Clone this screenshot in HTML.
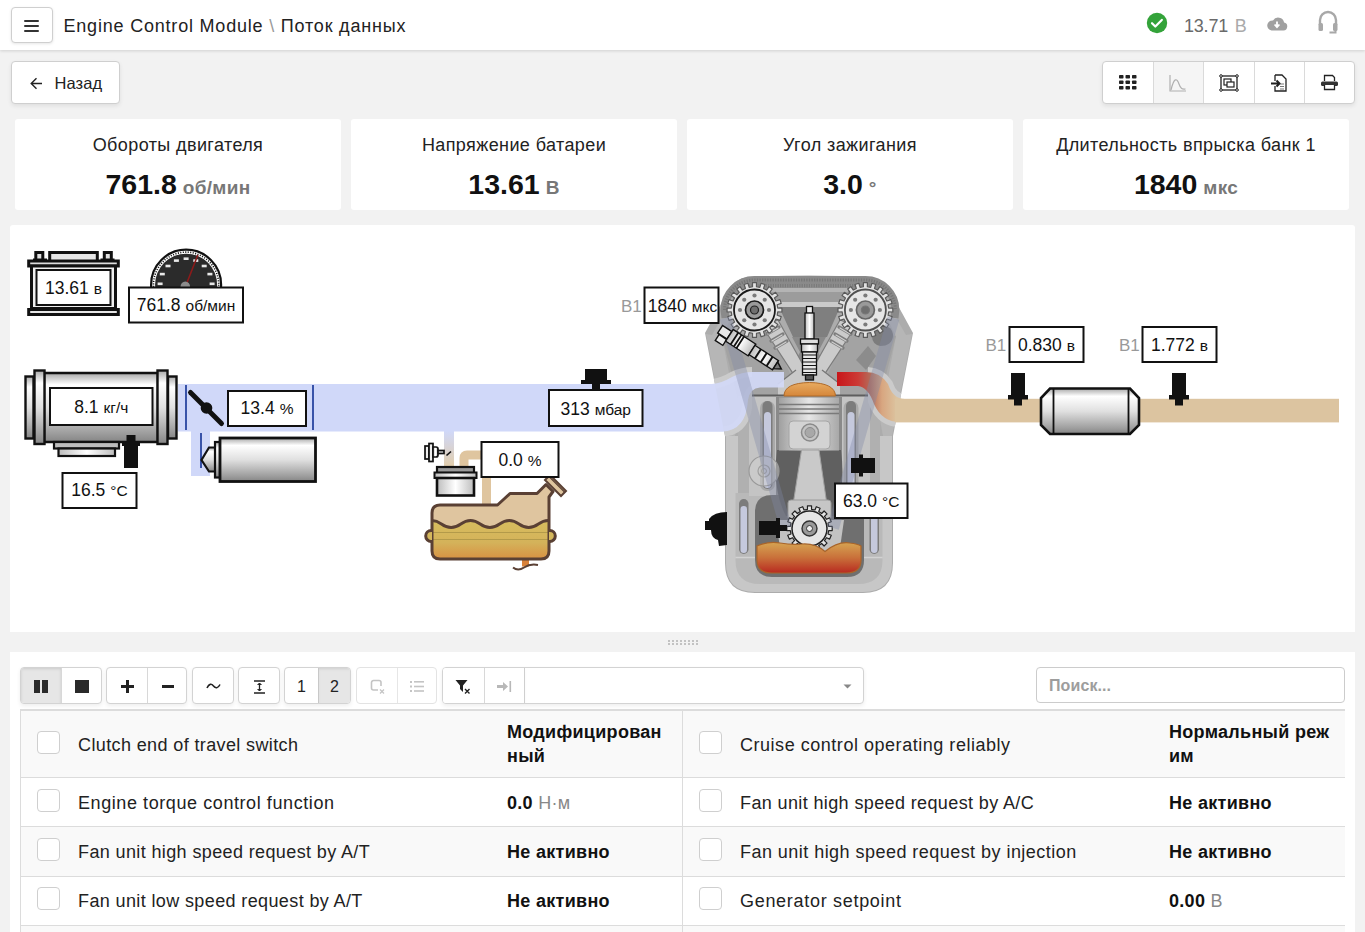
<!DOCTYPE html>
<html><head><meta charset="utf-8">
<style>
*{box-sizing:border-box}
html,body{margin:0;padding:0}
body{width:1365px;height:932px;overflow:hidden;background:#f2f2f2;font-family:"Liberation Sans",sans-serif;color:#222;position:relative}
.a{position:absolute}
.t{position:absolute;white-space:nowrap;line-height:1}
#hdr{left:0;top:0;width:1365px;height:50px;background:#fff;box-shadow:0 1px 3px rgba(0,0,0,.14)}
.btn{position:absolute;background:#fff;border:1px solid #cfcfcf;border-radius:4px;box-shadow:0 2px 4px rgba(0,0,0,.08)}
.card{position:absolute;top:119px;width:326px;height:91px;background:#fff;border-radius:3px}
.card .ttl{position:absolute;left:0;right:0;top:134px;text-align:center;font-size:18px;letter-spacing:.4px;color:#222;line-height:18px}
.card .val{position:absolute;left:0;right:0;text-align:center;line-height:28px;top:50.5px;white-space:nowrap}
.card .val b{font-size:28.5px;color:#111}
.card .val span{font-size:19px;font-weight:bold;color:#777;margin-left:6px;letter-spacing:.3px}
.panel{position:absolute;background:#fff}
.tb{position:absolute;top:667px;height:37px;border:1px solid #d3d3d3;border-radius:4px;background:#fff;box-shadow:0 2px 4px rgba(0,0,0,.07);overflow:hidden}
.tb i{position:absolute;top:0;bottom:0;border-left:1px solid #d8d8d8}
.row{position:absolute;left:21px;width:1324px;border-bottom:1px solid #dcdcdc}
.cb{position:absolute;width:23px;height:23px;border:1px solid #cfcfcf;border-radius:4px;background:#fff}
.rt{position:absolute;font-size:18px;letter-spacing:.38px;line-height:18px;white-space:nowrap;color:#222}
.rv{position:absolute;font-size:18px;font-weight:bold;letter-spacing:.3px;line-height:18px;white-space:nowrap;color:#111}
.rv span{font-weight:normal;color:#888}
</style></head><body>

<!-- header -->
<div id="hdr" class="a"></div>
<div class="btn" style="left:10.5px;top:7px;width:42px;height:35.5px;box-shadow:0 1px 3px rgba(0,0,0,.1)">
  <div class="a" style="left:12.5px;top:11.5px;width:15px;height:2.6px;background:#333;border-radius:1.3px"></div>
  <div class="a" style="left:12.5px;top:16.5px;width:15px;height:2.6px;background:#333;border-radius:1.3px"></div>
  <div class="a" style="left:12.5px;top:21.5px;width:15px;height:2.6px;background:#333;border-radius:1.3px"></div>
</div>
<div class="t" style="left:63.5px;top:17px;font-size:18px;letter-spacing:.8px;color:#222">Engine Control Module <span style="color:#999">\</span> Поток данных</div>

<svg class="a" style="left:1146px;top:12px" width="22" height="22" viewBox="0 0 22 22"><circle cx="11" cy="11" r="10.2" fill="#34a33a"/><path d="M6 11.2l3.3 3.3 6.5-6.6" fill="none" stroke="#fff" stroke-width="2.2" stroke-linecap="round" stroke-linejoin="round"/></svg>
<div class="t" style="left:1184px;top:17px;font-size:18px;color:#6a6a6a;letter-spacing:-.2px">13.71 <span style="color:#aaa;margin-left:2px">В</span></div>
<svg class="a" style="left:1266px;top:15px" width="22" height="17" viewBox="0 0 22 17"><path d="M5.5 15.5h12a4 4 0 0 0 .6-7.9A6 6 0 0 0 7 5.6a5 5 0 0 0-1.5 9.9z" fill="#a0a0a0"/><path d="M11 6.5v5M8.6 9.5l2.4 2.6 2.4-2.6" fill="none" stroke="#fff" stroke-width="1.8"/></svg>
<svg class="a" style="left:1317px;top:10px" width="22" height="25" viewBox="0 0 22 25"><path d="M3 15V10a8 8 0 0 1 16 0v5" fill="none" stroke="#a8a8a8" stroke-width="2.4"/><rect x="1.5" y="13" width="4.5" height="8" rx="1.5" fill="#a8a8a8"/><rect x="16" y="13" width="4.5" height="8" rx="1.5" fill="#a8a8a8"/><path d="M18.5 20v2.5h-6" fill="none" stroke="#a8a8a8" stroke-width="2"/></svg>

<!-- back button -->
<div class="btn" style="left:10.5px;top:61px;width:109px;height:42.5px">
  <svg class="a" style="left:18px;top:15px" width="13" height="13" viewBox="0 0 13 13"><path d="M12 6.5H1.5M6.5 1.2L1.2 6.5l5.3 5.3" fill="none" stroke="#222" stroke-width="1.4"/></svg>
  <div class="t" style="left:43px;top:12.5px;font-size:16.5px;letter-spacing:.1px;color:#222">Назад</div>
</div>

<!-- top right toolbar -->
<div class="btn" style="left:1102px;top:61px;width:253px;height:43px;overflow:hidden">
  <div class="a" style="left:49.5px;top:0;width:51px;height:43px;background:#f5f5f5"></div>
  <div class="a" style="left:49.5px;top:0;height:43px;border-left:1px solid #dadada"></div>
  <div class="a" style="left:100px;top:0;height:43px;border-left:1px solid #dadada"></div>
  <div class="a" style="left:150.5px;top:0;height:43px;border-left:1px solid #dadada"></div>
  <div class="a" style="left:201px;top:0;height:43px;border-left:1px solid #dadada"></div>
  <svg class="a" style="left:16px;top:13px" width="18" height="15" viewBox="0 0 18 15"><g fill="#222"><rect x="0" y="0" width="4.5" height="3.5" rx=".8"/><rect x="6.5" y="0" width="4.5" height="3.5" rx=".8"/><rect x="13" y="0" width="4.5" height="3.5" rx=".8"/><rect x="0" y="5.5" width="4.5" height="3.5" rx=".8"/><rect x="6.5" y="5.5" width="4.5" height="3.5" rx=".8"/><rect x="13" y="5.5" width="4.5" height="3.5" rx=".8"/><rect x="0" y="11" width="4.5" height="3.5" rx=".8"/><rect x="6.5" y="11" width="4.5" height="3.5" rx=".8"/><rect x="13" y="11" width="4.5" height="3.5" rx=".8"/></g></svg>
  <svg class="a" style="left:66px;top:13px" width="18" height="17" viewBox="0 0 18 17"><path d="M1 0v16h16" fill="none" stroke="#b0b0b0" stroke-width="1.2"/><path d="M2 15C5 2 8 3 10 9s4 5 6.5 5" fill="none" stroke="#b0b0b0" stroke-width="1.2"/></svg>
  <svg class="a" style="left:116px;top:12px" width="20" height="18" viewBox="0 0 20 18"><rect x="2" y="2" width="16" height="14" fill="none" stroke="#222" stroke-width="1.3"/><rect x="5" y="5" width="7" height="6" fill="#fff" stroke="#222" stroke-width="1.2"/><rect x="8" y="8" width="7" height="5" fill="#fff" stroke="#222" stroke-width="1.2"/><g fill="#fff" stroke="#222" stroke-width="1"><circle cx="2" cy="2" r="1.3"/><circle cx="18" cy="2" r="1.3"/><circle cx="2" cy="16" r="1.3"/><circle cx="18" cy="16" r="1.3"/></g></svg>
  <svg class="a" style="left:167px;top:12px" width="18" height="18" viewBox="0 0 18 18"><path d="M5 1h7l4 4v12H5v-5M5 7V1" fill="none" stroke="#222" stroke-width="1.3"/><path d="M1 9.5h8M6.5 6.5l3 3-3 3" fill="none" stroke="#222" stroke-width="2"/><path d="M10 10h4M10 12.5h4M10 15h4" stroke="#555" stroke-width=".8"/></svg>
  <svg class="a" style="left:217px;top:12px" width="19" height="17" viewBox="0 0 19 17"><path d="M4.5 7V1.5h8l2 2V7" fill="#fff" stroke="#222" stroke-width="1.3"/><rect x="1" y="7.5" width="17" height="4.5" rx="1.5" fill="#333"/><path d="M4.5 11v4.5h10V11" fill="#fff" stroke="#222" stroke-width="1.3"/></svg>
</div>

<!-- stat cards -->
<div class="card" style="left:15px"><div class="t ttl" style="top:17px">Обороты двигателя</div><div class="val"><b>761.8</b><span>об/мин</span></div></div>
<div class="card" style="left:351px"><div class="t ttl" style="top:17px">Напряжение батареи</div><div class="val"><b>13.61</b><span>В</span></div></div>
<div class="card" style="left:687px"><div class="t ttl" style="top:17px">Угол зажигания</div><div class="val"><b>3.0</b><span>°</span></div></div>
<div class="card" style="left:1023px"><div class="t ttl" style="top:17px">Длительность впрыска банк 1</div><div class="val"><b>1840</b><span>мкс</span></div></div>

<!-- panels -->
<div class="panel" style="left:10px;top:225px;width:1345px;height:407px;border-radius:3px 3px 0 0"></div>

<div class="panel" style="left:10px;top:652px;width:1345px;height:290px"></div>
<svg class="a" style="left:660px;top:636px" width="44" height="12" viewBox="660 636 44 12"><g fill="#c2c2c2"><rect x="668" y="640" width="2" height="2"/><rect x="668" y="643" width="2" height="2"/><rect x="672" y="640" width="2" height="2"/><rect x="672" y="643" width="2" height="2"/><rect x="676" y="640" width="2" height="2"/><rect x="676" y="643" width="2" height="2"/><rect x="680" y="640" width="2" height="2"/><rect x="680" y="643" width="2" height="2"/><rect x="684" y="640" width="2" height="2"/><rect x="684" y="643" width="2" height="2"/><rect x="688" y="640" width="2" height="2"/><rect x="688" y="643" width="2" height="2"/><rect x="692" y="640" width="2" height="2"/><rect x="692" y="643" width="2" height="2"/><rect x="696" y="640" width="2" height="2"/><rect x="696" y="643" width="2" height="2"/></g></svg>

<!-- DIAGRAM -->
<svg id="diag" class="a" style="left:0;top:0" width="1365" height="932" viewBox="0 0 1365 932">
<defs>
  <linearGradient id="gMetal" x1="0" y1="0" x2="0" y2="1">
    <stop offset="0" stop-color="#a8a8a8"/><stop offset=".17" stop-color="#ffffff"/><stop offset=".5" stop-color="#e0e0e0"/><stop offset=".85" stop-color="#a2a2a2"/><stop offset="1" stop-color="#858585"/>
  </linearGradient>
  <linearGradient id="gRing" x1="0" y1="0" x2="1" y2="0">
    <stop offset="0" stop-color="#bdbdbd"/><stop offset=".5" stop-color="#ffffff"/><stop offset="1" stop-color="#bdbdbd"/>
  </linearGradient>
  <linearGradient id="gPurge" x1="0" y1="0" x2="0" y2="1">
    <stop offset="0" stop-color="#d0d8f9"/><stop offset="1" stop-color="#e2cda9"/>
  </linearGradient>
  <linearGradient id="gFuel" x1="0" y1="0" x2="0" y2="1">
    <stop offset="0" stop-color="#d7bd5e"/><stop offset=".5" stop-color="#d4b25a"/><stop offset="1" stop-color="#d9853a"/>
  </linearGradient>
  <linearGradient id="gOil" x1="0" y1="0" x2="0" y2="1">
    <stop offset="0" stop-color="#d6a452"/><stop offset=".5" stop-color="#c9703a"/><stop offset="1" stop-color="#b82a20"/>
  </linearGradient>
  <linearGradient id="gExh" gradientUnits="userSpaceOnUse" x1="837" y1="0" x2="897" y2="0">
    <stop offset="0" stop-color="#c8161a"/><stop offset=".35" stop-color="#cc3a35"/><stop offset=".55" stop-color="#b46a58"/><stop offset=".75" stop-color="#d8a680"/><stop offset="1" stop-color="#dcc4a0"/>
  </linearGradient>
  <linearGradient id="gDome" x1="0" y1="0" x2="0" y2="1">
    <stop offset="0" stop-color="#e8ab60"/><stop offset="1" stop-color="#d5863a"/>
  </linearGradient>
  <linearGradient id="gPiston" x1="0" y1="0" x2="1" y2="0">
    <stop offset="0" stop-color="#a0a0a0"/><stop offset=".5" stop-color="#e6e6e6"/><stop offset="1" stop-color="#a8a8a8"/>
  </linearGradient>
  <linearGradient id="gBlueTr" x1="0" y1="0" x2="1" y2="0">
    <stop offset="0" stop-color="#cdd5f6"/><stop offset="1" stop-color="#bfc6e6"/>
  </linearGradient>
</defs>
<g stroke="#111">
  <rect x="33" y="258.5" width="14" height="5" fill="#111" stroke="none"/>
  <rect x="100.5" y="258.5" width="14" height="5" fill="#111" stroke="none"/>
  <rect x="35.8" y="252.5" width="7" height="7.5" fill="#e2e2e2" stroke-width="3"/>
  <rect x="104.3" y="252.5" width="7" height="7.5" fill="#e2e2e2" stroke-width="3"/>
  <rect x="49.7" y="252.5" width="47.6" height="9" fill="#e6e6e6" stroke-width="3"/>
  <rect x="28.7" y="261" width="89.6" height="5" fill="#dedede" stroke-width="3"/>
  <rect x="31.5" y="266" width="84" height="42.5" fill="#f0f0f0" stroke-width="3"/>
  <rect x="28.7" y="309.5" width="89.6" height="5" fill="#e6e6e6" stroke-width="3"/>
</g>
<rect x="36.5" y="270" width="74.0" height="35" fill="#fff" stroke="#111" stroke-width="2"/>
<text x="73.5" y="294" text-anchor="middle" font-family="Liberation Sans" fill="#111"><tspan font-size="17.5">13.61</tspan><tspan font-size="15.5" dx="5">в</tspan></text>
<clipPath id="spClip"><rect x="140" y="240" width="100" height="47"/></clipPath><g clip-path="url(#spClip)"><circle cx="186.1" cy="284.7" r="35" fill="#fff" stroke="#111" stroke-width="2.2"/><circle cx="186.1" cy="284.7" r="31" fill="#2b2b2b"/><circle cx="186.1" cy="284.7" r="32.6" fill="none" stroke="#111" stroke-width="1.6" stroke-dasharray="1.1 1.4"/><rect x="159.2" y="292.3" width="5" height="2.6" fill="#e8e8e8"/><rect x="157.6" y="282.5" width="5" height="2.6" fill="#e8e8e8"/><rect x="159.8" y="272.8" width="5" height="2.6" fill="#e8e8e8"/><rect x="165.5" y="264.7" width="5" height="2.6" fill="#e8e8e8"/><rect x="173.9" y="259.3" width="5" height="2.6" fill="#e8e8e8"/><rect x="183.6" y="257.4" width="5" height="2.6" fill="#e8e8e8"/><rect x="193.3" y="259.3" width="5" height="2.6" fill="#e8e8e8"/><rect x="201.7" y="264.7" width="5" height="2.6" fill="#e8e8e8"/><rect x="207.4" y="272.8" width="5" height="2.6" fill="#e8e8e8"/><rect x="209.6" y="282.5" width="5" height="2.6" fill="#e8e8e8"/><rect x="208.0" y="292.3" width="5" height="2.6" fill="#e8e8e8"/><path d="M185.3 287 L197.8 255" stroke="#8b1a1a" stroke-width="1.6"/><path d="M180.5 287 a4.8 5.5 0 0 1 9.6 0z" fill="#8c8c8c"/></g>
<rect x="129" y="287.5" width="114" height="35.0" fill="#fff" stroke="#111" stroke-width="2"/>
<text x="186.0" y="311" text-anchor="middle" font-family="Liberation Sans" fill="#111"><tspan font-size="17.5">761.8</tspan><tspan font-size="15.5" dx="5">об/мин</tspan></text>
<rect x="178" y="384" width="570" height="47.5" fill="#d0d8f9"/>
<rect x="191" y="430" width="19" height="46" fill="#d0d8f9"/>
<path d="M186 385v45M313 385v45M201 433v35" stroke="#1f3c9c" stroke-width="1.7"/>
<path d="M190.5 392.5 L221.5 423.5" stroke="#111" stroke-width="5" stroke-linecap="round"/><circle cx="206.5" cy="408" r="5.8" fill="#111"/>
<rect x="228" y="391" width="78" height="35" fill="#fff" stroke="#111" stroke-width="2"/>
<text x="267.0" y="414" text-anchor="middle" font-family="Liberation Sans" fill="#111"><tspan font-size="17.5">13.4</tspan><tspan font-size="15.5" dx="5">%</tspan></text>
<g stroke="#111">
  <rect x="25.5" y="376.5" width="8" height="62" fill="url(#gMetal)" stroke-width="2.4"/>
  <rect x="168" y="376.5" width="8.5" height="62" fill="url(#gMetal)" stroke-width="2.4"/>
  <rect x="44" y="373" width="114" height="69" fill="url(#gMetal)" stroke-width="2.5"/>
  <rect x="34.5" y="370.5" width="10" height="73.5" fill="url(#gMetal)" stroke-width="2.4"/>
  <rect x="157.5" y="370.5" width="10" height="73.5" fill="url(#gMetal)" stroke-width="2.4"/>
  <rect x="54" y="442" width="65" height="6.5" fill="#bdbdbd" stroke-width="2.2"/>
  <rect x="58.5" y="448.5" width="56.5" height="7.5" fill="url(#gRing)" stroke-width="2.2"/>
</g>
<path d="M126.5 435h9v7h4.5v4h-2v22h-14v-22h-2v-4h4.5z" fill="#111"/>
<rect x="50" y="388" width="102.5" height="37" fill="#fff" stroke="#111" stroke-width="2"/>
<text x="101.25" y="413" text-anchor="middle" font-family="Liberation Sans" fill="#111"><tspan font-size="17.5">8.1</tspan><tspan font-size="15.5" dx="5">кг/ч</tspan></text>
<rect x="62.5" y="473" width="74.0" height="35" fill="#fff" stroke="#111" stroke-width="2"/>
<text x="99.5" y="496" text-anchor="middle" font-family="Liberation Sans" fill="#111"><tspan font-size="17.5">16.5</tspan><tspan font-size="15.5" dx="5">°C</tspan></text>
<g stroke="#111">
  <path d="M216 447.5 L209 447.5 L201.5 460 L209 471.5 L216 471.5 Z" fill="url(#gMetal)" stroke-width="2.2"/>
  <rect x="215" y="442" width="5" height="35.5" fill="url(#gMetal)" stroke-width="2.2"/>
  <rect x="220" y="438" width="95.5" height="43.5" fill="url(#gMetal)" stroke-width="2.8"/>
</g>
<path d="M585 369h22v11h4v4h-11v6h-8v-6h-11v-4h4z" fill="#111"/>
<rect x="549" y="390" width="93.5" height="36" fill="#fff" stroke="#111" stroke-width="2"/>
<text x="595.75" y="415" text-anchor="middle" font-family="Liberation Sans" fill="#111"><tspan font-size="17.5">313</tspan><tspan font-size="15.5" dx="5">мбар</tspan></text>
<g>
  <rect x="444" y="431" width="10" height="37" fill="url(#gPurge)"/>
  <path d="M464 468 V458 Q464 455 467 455 H481" fill="none" stroke="#dfc59f" stroke-width="9"/>
  <path d="M486.5 477 V506" fill="none" stroke="#dfc59f" stroke-width="9"/>
  <g stroke="#111" stroke-width="1.7" fill="url(#gRing)">
    <rect x="425" y="446" width="4" height="13"/>
    <rect x="429" y="443.5" width="4" height="18"/>
    <path d="M433 447 h3 q2 0 2 2 v6 q0 2 -2 2 h-3z"/>
    <rect x="438" y="450.5" width="6" height="3" fill="#ddd"/>
  </g>
  <path d="M446.5 455.5 l4.5 -4" stroke="#111" stroke-width="1.6"/>
  <g stroke="#111">
    <rect x="437" y="467" width="37" height="6" fill="#9a9a9a" stroke-width="2.2"/>
    <rect x="434.5" y="472.5" width="42" height="5.5" fill="url(#gRing)" stroke-width="2"/>
    <rect x="437" y="478" width="37" height="17.5" fill="url(#gRing)" stroke-width="2.6"/>
  </g>
  <clipPath id="tankClip"><path d="M440 505 H497.5 L510 493.5 H537 L546 484.5 L553 491.5 L549 497 V551 Q549 559 541 559 H440 Q432 559 432 551 V513 Q432 505 440 505Z"/></clipPath>
  <path d="M522 557 V566.5 h7 V557z" fill="#d9823a"/>
  <path d="M513 567.5 q5 4 11 0 t14 -2.5" fill="none" stroke="#5a4034" stroke-width="2"/>
  <path d="M440 505 H497.5 L510 493.5 H537 L546 484.5 L553 491.5 L549 497 V551 Q549 559 541 559 H440 Q432 559 432 551 V513 Q432 505 440 505Z" fill="#dfc59f"/>
  
  <g clip-path="url(#tankClip)">
    <path d="M422 524 q9.7 -7 19.4 0 t19.4 0 t19.4 0 t19.4 0 t19.4 0 t19.4 0 t19.4 0 V565 H422z" fill="url(#gFuel)"/>
    <path d="M422 524 q9.7 -7 19.4 0 t19.4 0 t19.4 0 t19.4 0 t19.4 0 t19.4 0 t19.4 0" fill="none" stroke="#5a4034" stroke-width="2.8"/>
    <path d="M430 532.5 h125 M430 539.5 h125" stroke="#b39a4a" stroke-width="1.2"/>
  </g>
  <path d="M440 505 H497.5 L510 493.5 H537 L546 484.5 L553 491.5 L549 497 V551 Q549 559 541 559 H440 Q432 559 432 551 V513 Q432 505 440 505Z" fill="none" stroke="#5a4034" stroke-width="3" stroke-linejoin="round"/>
  <path d="M432 530.5 h-.8 a5.5 5.5 0 0 0 0 11 h.8 M549 530.5 h.8 a5.5 5.5 0 0 1 0 11 h-.8" fill="#d5b85c" stroke="#5a4034" stroke-width="3"/>
  <path d="M545 480 l5-5 l16 16 l-5 5z" fill="#dfc59f" stroke="#5a4034" stroke-width="2"/>
  <path d="M549 476.5 l15.5 15.5" stroke="#5a4034" stroke-width="1.2"/>
</g>
<rect x="481.5" y="442" width="77.0" height="35" fill="#fff" stroke="#111" stroke-width="2"/>
<text x="520.0" y="466" text-anchor="middle" font-family="Liberation Sans" fill="#111"><tspan font-size="17.5">0.0</tspan><tspan font-size="15.5" dx="5">%</tspan></text>
<g>
  <path d="M748 277 Q809 274 870 277 Q883 278 890 291 L913 333 L893 436 V563 Q893 593 863 593 H755 Q725 593 725 563 V436 L705 333 L728 291 Q735 278 748 277Z" fill="#acacac"/>
  <!-- outer light band on lower block -->
  <path d="M726 436 H892 V563 Q892 592 863 592 H755 Q726 592 726 563Z" fill="#c7c7c7"/>
  <path d="M735.5 493 H882.5 V560 Q882.5 584 858 584 H760 Q735.5 584 735.5 560Z" fill="#b9b9b9"/>
  <path d="M735.5 557.5 H882.5" stroke="#d2d2d2" stroke-width="1.5"/>
  <!-- side slanted light bands (head/neck) -->
  <path d="M712 335 L733 298 L740 300 L722 336 L738 420 L735 436 L726 436 L706 334Z" fill="#b6b6b6"/>
  <path d="M906 335 L885 298 L878 300 L896 336 L880 420 L883 436 L892 436 L912 334Z" fill="#b6b6b6"/>
  <!-- head top dark -->
  <path d="M752 281 Q809 278 866 281 Q876 282 882 292 L886 300 H732 L736 292 Q742 282 752 281Z" fill="#8e8e8e"/>
  <path d="M744 285.5 H874" stroke="#7a7a7a" stroke-width="3.5" stroke-dasharray="1.2 1.2"/>
  <rect x="770" y="288" width="78" height="4" fill="#b4b4b4"/>
  <rect x="770" y="292" width="78" height="10" fill="#9c9c9c"/>
  <rect x="770" y="302" width="78" height="5" fill="#cacaca"/>
  <path d="M779 307 H840 L827 337 H793Z" fill="#7f7f7f"/>
  <!-- mid head medium -->
  <path d="M722 336 L770 330 L792 378 H826 L848 330 L896 336 L880 398 H738Z" fill="#a3a3a3"/>
  <path d="M792 337 H826 L818 352 L826 368 H792 L800 352Z" fill="#8a8a8a"/>
  <!-- valve arms (light V) -->
  <path d="M762 326 L778 320 L806 370 L796 378Z" fill="#cbcbcb" stroke="#7c7c7c" stroke-width="1.2"/>
  <path d="M856 326 L840 320 L812 370 L822 378Z" fill="#cbcbcb" stroke="#7c7c7c" stroke-width="1.2"/>
  <g stroke="#7d7d7d" stroke-width="3.2" stroke-linecap="round">
    <path d="M767 334 l12 -7 M771 341 l12 -7 M775 348 l12 -7"/>
    <path d="M851 334 l-12 -7 M847 341 l-12 -7 M843 348 l-12 -7"/>
  </g>
  <g stroke="#cfcfcf" stroke-width="1.2" stroke-linecap="round">
    <path d="M768 334 l10 -6 M772 341 l10 -6 M776 348 l10 -6"/>
    <path d="M850 334 l-10 -6 M846 341 l-10 -6 M842 348 l-10 -6"/>
  </g>
  <path d="M877 326 Q893 324 893 336 Q892 346 880 346 Q872 344 872 336Z" fill="#7c7c7c"/>
  <path d="M856 360 L868 346 L876 356 L866 370Z" fill="#8c8c8c"/>
  <!-- combustion chamber light -->
  <path d="M778 384 L796 370 H822 L840 384 V397 H778Z" fill="#c9c9c9"/>
  <path d="M778 384 L796 370 M840 384 L822 370" stroke="#777" stroke-width="1.2"/>
  <!-- cylinder area -->
  <path d="M738 396 H880 V493 H738Z" fill="#b0b0b0"/>
  <rect x="749" y="396" width="121" height="100" fill="#c4c4c4"/>
  <rect x="760" y="401" width="15" height="90" rx="7" fill="#a9a9a9"/>
  <rect x="762.5" y="401" width="10" height="88" rx="5" fill="#7c7c7c"/>
  <rect x="764" y="412" width="7" height="76" rx="3.5" fill="#c5c9dd"/>
  <rect x="843.5" y="401" width="15" height="90" rx="7" fill="#a9a9a9"/>
  <rect x="846" y="401" width="10" height="88" rx="5" fill="#7c7c7c"/>
  <rect x="847.5" y="412" width="7" height="76" rx="3.5" fill="#c5c9dd"/>
  <path d="M749 395.5 H871" stroke="#5e5e5e" stroke-width="2"/>
  <rect x="776" y="397" width="66" height="100" fill="#8a8a8a"/>
  <!-- crankcase -->
  <path d="M755 512 Q755 495 772 495 H846 Q864 495 864 512 V560 Q864 577 847 577 H772 Q755 577 755 560Z" fill="#6f6f6f"/>
  <path d="M777 450 H841 Q846 490 834 516 H786 Q772 490 777 450Z" fill="#606060"/>
  <path d="M776 520 H844 L838 562 H782Z" fill="#c2c2c2"/>
  <!-- coolant lower -->
  <rect x="739" y="499" width="9.5" height="55" rx="4.7" fill="#7c7c7c"/>
  <rect x="740.5" y="506" width="6.5" height="47" rx="3.2" fill="#c5c9dd"/>
  <rect x="869.5" y="499" width="9.5" height="55" rx="4.7" fill="#7c7c7c"/>
  <rect x="871" y="506" width="6.5" height="47" rx="3.2" fill="#c5c9dd"/>
  <!-- piston -->
  <rect x="779" y="397.5" width="60" height="53" fill="url(#gPiston)"/>
  <path d="M779 404.5 H839 M779 409 H839 M779 413.5 H839" stroke="#7a7a7a" stroke-width="1.4"/>
  <rect x="789" y="421" width="41" height="28" rx="4" fill="#d3d3d3" stroke="#a5a5a5" stroke-width="1"/>
  <circle cx="810" cy="432.5" r="8.5" fill="#c4c4c4" stroke="#8a8a8a" stroke-width="1.5"/>
  <circle cx="810" cy="432.5" r="5" fill="#a8a8a8" stroke="#8a8a8a" stroke-width="1"/>
  <path d="M784 396 Q784 383 809.5 382.5 Q835 383 835.5 396Z" fill="url(#gDome)" stroke="#b06a28" stroke-width="1"/>
  <!-- con rod -->
  <path d="M801.5 450 H819 L827 505 H793Z" fill="#c9c9c9" stroke="#a0a0a0" stroke-width="1"/>
  <rect x="788" y="500" width="43" height="20" rx="3" fill="#c6c6c6" stroke="#9a9a9a" stroke-width="1"/>
  <!-- oil -->
  <!-- small pulley -->
  <circle cx="764" cy="471" r="15" fill="#cfcfcf" fill-opacity=".5" stroke="#999" stroke-width="1.2"/>
  <circle cx="764" cy="471" r="6" fill="none" stroke="#a0a0a0" stroke-width="1.2"/>
  <circle cx="764" cy="471" r="2.5" fill="none" stroke="#a0a0a0" stroke-width="1"/>
</g>
<path d="M725.5 318 L724.5 310 A30 30 0 0 1 754.5 280 H865.4 A30 30 0 0 1 895.4 310 L894.5 318" fill="none" stroke="#8a8a8a" stroke-width="8"/>
<path d="M724.5 310 A30 30 0 0 1 754.5 280 H865.4 A30 30 0 0 1 895.4 310" fill="none" stroke="#777" stroke-width="3" stroke-dasharray="1.3 1.3"/>
<polygon points="777.72,308.03 781.93,308.01 781.93,311.99 777.72,311.97 777.19,315.30 781.20,316.59 779.97,320.36 775.97,319.05 774.44,322.05 777.86,324.52 775.52,327.73 772.12,325.24 769.74,327.62 772.23,331.02 769.02,333.36 766.55,329.94 763.55,331.47 764.86,335.47 761.09,336.70 759.80,332.69 756.47,333.22 756.49,337.43 752.51,337.43 752.53,333.22 749.20,332.69 747.91,336.70 744.14,335.47 745.45,331.47 742.45,329.94 739.98,333.36 736.77,331.02 739.26,327.62 736.88,325.24 733.48,327.73 731.14,324.52 734.56,322.05 733.03,319.05 729.03,320.36 727.80,316.59 731.81,315.30 731.28,311.97 727.07,311.99 727.07,308.01 731.28,308.03 731.81,304.70 727.80,303.41 729.03,299.64 733.03,300.95 734.56,297.95 731.14,295.48 733.48,292.27 736.88,294.76 739.26,292.38 736.77,288.98 739.98,286.64 742.45,290.06 745.45,288.53 744.14,284.53 747.91,283.30 749.20,287.31 752.53,286.78 752.51,282.57 756.49,282.57 756.47,286.78 759.80,287.31 761.09,283.30 764.86,284.53 763.55,288.53 766.55,290.06 769.02,286.64 772.23,288.98 769.74,292.38 772.12,294.76 775.52,292.27 777.86,295.48 774.44,297.95 775.97,300.95 779.97,299.64 781.20,303.41 777.19,304.70" fill="#e2e2e2" stroke="#5a5a5a" stroke-width="1.2" stroke-linejoin="round"/>
<circle cx="754.5" cy="310" r="20.5" fill="#e6e6e6" stroke="#1a1a1a" stroke-width="1.8"/>
<circle cx="769.00" cy="310.00" r="2.1" fill="#7a7a7a"/>
<circle cx="764.75" cy="320.25" r="2.1" fill="#7a7a7a"/>
<circle cx="754.50" cy="324.50" r="2.1" fill="#7a7a7a"/>
<circle cx="744.25" cy="320.25" r="2.1" fill="#7a7a7a"/>
<circle cx="740.00" cy="310.00" r="2.1" fill="#7a7a7a"/>
<circle cx="744.25" cy="299.75" r="2.1" fill="#7a7a7a"/>
<circle cx="754.50" cy="295.50" r="2.1" fill="#7a7a7a"/>
<circle cx="764.75" cy="299.75" r="2.1" fill="#7a7a7a"/>
<circle cx="754.5" cy="310" r="9" fill="#9a9a9a" stroke="#1a1a1a" stroke-width="1.7"/>
<circle cx="754.5" cy="310" r="4" fill="#6f6f6f" stroke="#222" stroke-width="1.2"/>
<polygon points="888.62,308.03 892.83,308.01 892.83,311.99 888.62,311.97 888.09,315.30 892.10,316.59 890.87,320.36 886.87,319.05 885.34,322.05 888.76,324.52 886.42,327.73 883.02,325.24 880.64,327.62 883.13,331.02 879.92,333.36 877.45,329.94 874.45,331.47 875.76,335.47 871.99,336.70 870.70,332.69 867.37,333.22 867.39,337.43 863.41,337.43 863.43,333.22 860.10,332.69 858.81,336.70 855.04,335.47 856.35,331.47 853.35,329.94 850.88,333.36 847.67,331.02 850.16,327.62 847.78,325.24 844.38,327.73 842.04,324.52 845.46,322.05 843.93,319.05 839.93,320.36 838.70,316.59 842.71,315.30 842.18,311.97 837.97,311.99 837.97,308.01 842.18,308.03 842.71,304.70 838.70,303.41 839.93,299.64 843.93,300.95 845.46,297.95 842.04,295.48 844.38,292.27 847.78,294.76 850.16,292.38 847.67,288.98 850.88,286.64 853.35,290.06 856.35,288.53 855.04,284.53 858.81,283.30 860.10,287.31 863.43,286.78 863.41,282.57 867.39,282.57 867.37,286.78 870.70,287.31 871.99,283.30 875.76,284.53 874.45,288.53 877.45,290.06 879.92,286.64 883.13,288.98 880.64,292.38 883.02,294.76 886.42,292.27 888.76,295.48 885.34,297.95 886.87,300.95 890.87,299.64 892.10,303.41 888.09,304.70" fill="#e2e2e2" stroke="#5a5a5a" stroke-width="1.2" stroke-linejoin="round"/>
<circle cx="865.4" cy="310" r="20.5" fill="#e6e6e6" stroke="#505050" stroke-width="1.8"/>
<circle cx="879.90" cy="310.00" r="2.1" fill="#7a7a7a"/>
<circle cx="875.65" cy="320.25" r="2.1" fill="#7a7a7a"/>
<circle cx="865.40" cy="324.50" r="2.1" fill="#7a7a7a"/>
<circle cx="855.15" cy="320.25" r="2.1" fill="#7a7a7a"/>
<circle cx="850.90" cy="310.00" r="2.1" fill="#7a7a7a"/>
<circle cx="855.15" cy="299.75" r="2.1" fill="#7a7a7a"/>
<circle cx="865.40" cy="295.50" r="2.1" fill="#7a7a7a"/>
<circle cx="875.65" cy="299.75" r="2.1" fill="#7a7a7a"/>
<circle cx="865.4" cy="310" r="9" fill="#9a9a9a" stroke="#666" stroke-width="1.7"/>
<circle cx="865.4" cy="310" r="4" fill="#6f6f6f" stroke="#777" stroke-width="1.2"/>
<polygon points="828.69,526.46 832.21,526.44 832.21,530.56 828.69,530.54 828.01,533.96 831.27,535.29 829.69,539.09 826.45,537.73 824.51,540.63 827.01,543.10 824.10,546.01 821.63,543.51 818.73,545.45 820.09,548.69 816.29,550.27 814.96,547.01 811.54,547.69 811.56,551.21 807.44,551.21 807.46,547.69 804.04,547.01 802.71,550.27 798.91,548.69 800.27,545.45 797.37,543.51 794.90,546.01 791.99,543.10 794.49,540.63 792.55,537.73 789.31,539.09 787.73,535.29 790.99,533.96 790.31,530.54 786.79,530.56 786.79,526.44 790.31,526.46 790.99,523.04 787.73,521.71 789.31,517.91 792.55,519.27 794.49,516.37 791.99,513.90 794.90,510.99 797.37,513.49 800.27,511.55 798.91,508.31 802.71,506.73 804.04,509.99 807.46,509.31 807.44,505.79 811.56,505.79 811.54,509.31 814.96,509.99 816.29,506.73 820.09,508.31 818.73,511.55 821.63,513.49 824.10,510.99 827.01,513.90 824.51,516.37 826.45,519.27 829.69,517.91 831.27,521.71 828.01,523.04" fill="#e4e4e4" stroke="#222" stroke-width="1.2" stroke-linejoin="round"/>
<circle cx="809.5" cy="528.5" r="17.5" fill="#e6e6e6" stroke="#222" stroke-width="1.5"/>
<circle cx="809.5" cy="528.5" r="7.5" fill="#9a9a9a" stroke="#333" stroke-width="1.4"/><circle cx="809.5" cy="528.5" r="3" fill="#eee" stroke="#333" stroke-width="1"/>
<path d="M757 546 Q768 541 780 543 Q792 545 802 544 Q815 543 825 551.5 Q838 541 850 543 Q858 544 861 546 V560 Q861 573 846 573 H772 Q757 573 757 560Z" fill="url(#gOil)" stroke="#a8642a" stroke-width="1.2"/>
<clipPath id="silClip"><path d="M748 277 Q809 274 870 277 Q883 278 890 291 L913 333 L893 436 V563 Q893 593 863 593 H755 Q725 593 725 563 V436 L705 333 L728 291 Q735 278 748 277Z"/></clipPath><clipPath id="inClip"><rect x="690" y="300" width="62" height="200"/></clipPath><clipPath id="exClip"><rect x="868" y="300" width="60" height="200"/></clipPath>
<g clip-path="url(#silClip)"><g clip-path="url(#inClip)"><path d="M700 384 H712 Q722 383 732 377 Q742 372 752 372 H784 V387.5 H760 Q750 388 748 400 Q746 431 722 431.5 H700Z" fill="none" stroke="#cbcbcb" stroke-width="10" stroke-linejoin="round"/></g>
<g clip-path="url(#exClip)"><path d="M837 372 H866 Q880 372 888 384 Q893 399 905 399 H925 V422 H900 Q882 422 874 404 Q868 387 858 386 H837Z" fill="none" stroke="#cbcbcb" stroke-width="10" stroke-linejoin="round"/></g></g>
<path d="M700 384 H712 Q722 383 732 377 Q742 372 752 372 H784 V387.5 H760 Q750 388 748 400 Q746 431 722 431.5 H700Z" fill="#d2d9f7" fill-opacity=".92"/>
<path d="M714 384 Q740 372 760 372 H784" fill="none" stroke="#d6d6d6" stroke-width="0"/>
<path d="M837 372 H866 Q880 372 888 384 Q893 399 905 399 H925 V422 H900 Q882 422 874 404 Q868 387 858 386 H837Z" fill="url(#gExh)"/>
<path d="M786 528 L725.5 318 M833 528 L893.5 318" stroke="#7f88a6" stroke-opacity=".36" stroke-width="12"/>
<g stroke="#111" stroke-width="1.3">
  <rect x="806.5" y="306.5" width="6" height="7" fill="#f0f0f0"/>
  <rect x="805" y="313" width="9" height="26" fill="url(#gRing)"/>
  <rect x="800.5" y="339" width="18" height="5" fill="#ddd"/>
  <rect x="801.5" y="344" width="16" height="8" fill="url(#gRing)"/>
  <rect x="802.5" y="352" width="14" height="23" fill="#e6e6e6"/>
  <path d="M802.5 355h14M802.5 358.5h14M802.5 362h14M802.5 365.5h14M802.5 369h14M802.5 372.5h14" stroke-width="1.2"/>
  <rect x="805.5" y="375" width="8" height="5" fill="#555"/>
</g>
<g transform="translate(752 350) rotate(33)" stroke="#111" stroke-width="1.4">
  <rect x="-38" y="-4.5" width="11" height="9" fill="#e8e8e8"/>
  <path d="M-36 5 h9 v7 h-9z" fill="#e8e8e8"/>
  <rect x="-27" y="-7" width="27" height="14" fill="url(#gRing)"/>
  <path d="M-21 -7v14M-17 -7v14M-14 -7v14" stroke-width="1.8"/>
  <rect x="0" y="-5.5" width="28" height="11" fill="url(#gRing)"/>
  <path d="M7 -5.5v11M14 -5.5v11M21 -5.5v11" stroke-width="2"/>
  <path d="M28 -4 L35 0 L28 4Z" fill="#777"/>
</g>
<path d="M851 458h8v-3.5h4v3.5h12v15h-12v3.5h-4v-3.5h-8z" fill="#111"/>
<path d="M759 521h17v-3h4v7h7v6h-7v7h-4v-3h-17z" fill="#111"/>
<path d="M709 519 Q714 512 727 512 V545 L719 546 L718 540 Q711 538 711 530 H705 V521 H709Z" fill="#111"/>
<rect x="835" y="483.5" width="72.5" height="34.5" fill="#fff" stroke="#111" stroke-width="2"/>
<text x="871.25" y="507" text-anchor="middle" font-family="Liberation Sans" fill="#111"><tspan font-size="17.5">63.0</tspan><tspan font-size="15.5" dx="5">°C</tspan></text>
<text x="621" y="312" font-family="Liberation Sans" font-size="17" fill="#999">B1</text>
<rect x="644.5" y="287.5" width="74.0" height="35.5" fill="#fff" stroke="#111" stroke-width="2"/>
<text x="682.5" y="312" text-anchor="middle" font-family="Liberation Sans" fill="#111"><tspan font-size="17.5">1840</tspan><tspan font-size="15.5" dx="5">мкс</tspan></text>
<rect x="895" y="398.8" width="444" height="23.6" fill="#dcc4a0"/>
<g stroke="#111">
  <path d="M1050 388.5 H1130 L1139 398 V425 L1130 434 H1050 L1041 425 V398Z" fill="url(#gMetal)" stroke-width="2.6"/>
  <path d="M1053.5 389v45M1128.5 389v45" stroke-width="1.8"/>
</g>
<path d="M1011 373h14v22h3v4.5h-6v6h-8v-6h-6v-4.5h3z" fill="#111"/>
<path d="M1172 373h14v22h3v4.5h-6v6h-8v-6h-6v-4.5h3z" fill="#111"/>
<text x="985.5" y="351" font-family="Liberation Sans" font-size="17" fill="#999">B1</text>
<text x="1119" y="351" font-family="Liberation Sans" font-size="17" fill="#999">B1</text>
<rect x="1009.5" y="327" width="74.0" height="35" fill="#fff" stroke="#111" stroke-width="2"/>
<text x="1046.5" y="351" text-anchor="middle" font-family="Liberation Sans" fill="#111"><tspan font-size="17.5">0.830</tspan><tspan font-size="15.5" dx="5">в</tspan></text>
<rect x="1142.5" y="327" width="74.0" height="35" fill="#fff" stroke="#111" stroke-width="2"/>
<text x="1179.5" y="351" text-anchor="middle" font-family="Liberation Sans" fill="#111"><tspan font-size="17.5">1.772</tspan><tspan font-size="15.5" dx="5">в</tspan></text>
</svg>

<!-- bottom toolbar -->
<div class="tb" style="left:20px;width:82px">
  <div class="a" style="left:0;top:0;width:40px;height:37px;background:#e6e6e6;box-shadow:inset 0 1px 3px rgba(0,0,0,.12)"></div><i style="left:40px"></i>
  <div class="a" style="left:13px;top:12px;width:5.5px;height:13px;background:#2a2a2a"></div>
  <div class="a" style="left:21px;top:12px;width:5.5px;height:13px;background:#2a2a2a"></div>
  <div class="a" style="left:54px;top:12px;width:13.5px;height:13px;background:#2a2a2a"></div>
</div>
<div class="tb" style="left:106px;width:81px"><i style="left:40px"></i>
  <div class="a" style="left:14px;top:16.5px;width:12.5px;height:3px;background:#222"></div>
  <div class="a" style="left:18.8px;top:12px;width:3px;height:12.5px;background:#222"></div>
  <div class="a" style="left:54.5px;top:17px;width:12px;height:3px;background:#222"></div>
</div>
<div class="tb" style="left:192px;width:42px">
  <svg class="a" style="left:13px;top:14px" width="15" height="8" viewBox="0 0 15 8"><path d="M1 6C3 1.5 5.5 1.5 7.5 4S12 6.5 14 2.5" fill="none" stroke="#222" stroke-width="1.6"/></svg>
</div>
<div class="tb" style="left:238px;width:42px">
  <svg class="a" style="left:14.5px;top:12px" width="11" height="14" viewBox="0 0 11 14"><path d="M0 1h11M0 13h11" stroke="#222" stroke-width="1.4"/><path d="M5.5 3.5v7" stroke="#222" stroke-width="1.3"/><path d="M3.5 5l2-2 2 2M3.5 9l2 2 2-2" fill="#222" stroke="#222" stroke-width="1"/></svg>
</div>
<div class="tb" style="left:284px;width:67px">
  <div class="a" style="left:33px;top:0;width:34px;height:37px;background:#e6e6e6;box-shadow:inset 0 1px 3px rgba(0,0,0,.1)"></div><i style="left:33px;border-color:#c8c8c8"></i>
  <div class="t" style="left:12px;top:11px;font-size:16px;color:#222">1</div>
  <div class="t" style="left:45px;top:11px;font-size:16px;color:#222">2</div>
</div>
<div class="tb" style="left:356px;width:81px;border-color:#e3e3e3;box-shadow:none"><i style="left:40px;border-color:#e6e6e6"></i>
  <svg class="a" style="left:13px;top:11px" width="16" height="16" viewBox="0 0 16 16"><path d="M8 11H3.5A2 2 0 0 1 1.5 9V3.5a2 2 0 0 1 2-2H9a2 2 0 0 1 2 2V7" fill="none" stroke="#c4c4c4" stroke-width="1.6"/><path d="M10 10.5l4 4M14 10.5l-4 4" stroke="#c4c4c4" stroke-width="1.2"/></svg>
  <svg class="a" style="left:53px;top:12px" width="15" height="13" viewBox="0 0 15 13"><g fill="#c4c4c4"><rect x="0" y="1" width="2" height="2"/><rect x="0" y="5.5" width="2" height="2"/><rect x="0" y="10" width="2" height="2"/><rect x="4" y="1" width="10" height="1.6"/><rect x="4" y="5.7" width="10" height="1.6"/><rect x="4" y="10.2" width="10" height="1.6"/></g></svg>
</div>
<div class="tb" style="left:442px;width:422px"><i style="left:41px"></i><i style="left:81px;border-color:#cfcfcf"></i>
  <div class="a" style="left:0;top:0;width:81px;height:37px;background:#fff;box-shadow:0 2px 4px rgba(0,0,0,.06)"></div><i style="left:41px"></i><i style="left:81px;border-color:#cfcfcf"></i>
  <svg class="a" style="left:11.5px;top:11px" width="17" height="16" viewBox="0 0 17 16"><path d="M0.5 1h12L8 6.5V13L5 10V6.5z" fill="#222"/><path d="M10 10l4.5 4.5M14.5 10L10 14.5" stroke="#222" stroke-width="1.4"/></svg>
  <svg class="a" style="left:54px;top:12px" width="16" height="13" viewBox="0 0 16 13"><path d="M0 5h6V2l5 4.5-5 4.5V8H0z" fill="#b8b8b8"/><rect x="12.5" y="1" width="1.6" height="11" fill="#b8b8b8"/></svg>
  <svg class="a" style="left:400px;top:16px" width="9" height="5" viewBox="0 0 9 5"><path d="M0.5 0.5h8L4.5 4.5z" fill="#888"/></svg>
</div>
<div class="a" style="left:1036px;top:667px;width:309px;height:36px;border:1px solid #cccccc;border-radius:4px;background:#fff"></div>
<div class="t" style="left:1049px;top:677.5px;font-size:16px;font-weight:bold;color:#9d9d9d;letter-spacing:.1px">Поиск...</div>


<!-- table -->
<div class="a" style="left:20px;top:709px;width:1325px;height:2px;background:#dcdcdc"></div>
<div class="a" style="left:20px;top:711px;width:1px;height:230px;background:#dcdcdc"></div>
<div class="row" style="top:711px;height:67px;background:#f9f9f9"></div>
<div class="row" style="top:778px;height:49px;background:#fff"></div>
<div class="row" style="top:827px;height:50px;background:#f9f9f9"></div>
<div class="row" style="top:877px;height:49px;background:#fff"></div>
<div class="row" style="top:926px;height:20px;background:#f9f9f9"></div>
<div class="a" style="left:682px;top:711px;width:1px;height:230px;background:#dcdcdc"></div>

<div class="cb" style="left:37px;top:731px"></div>
<div class="cb" style="left:37px;top:789px"></div>
<div class="cb" style="left:37px;top:838px"></div>
<div class="cb" style="left:37px;top:887px"></div>
<div class="cb" style="left:699px;top:731px"></div>
<div class="cb" style="left:699px;top:789px"></div>
<div class="cb" style="left:699px;top:838px"></div>
<div class="cb" style="left:699px;top:887px"></div>

<div class="rt" style="left:78px;top:736px">Clutch end of travel switch</div>
<div class="rt" style="left:78px;top:794px;letter-spacing:.58px">Engine torque control function</div>
<div class="rt" style="left:78px;top:843px">Fan unit high speed request by A/T</div>
<div class="rt" style="left:78px;top:892px">Fan unit low speed request by A/T</div>
<div class="rt" style="left:740px;top:736px;letter-spacing:.53px">Cruise control operating reliably</div>
<div class="rt" style="left:740px;top:794px">Fan unit high speed request by A/C</div>
<div class="rt" style="left:740px;top:843px;letter-spacing:.46px">Fan unit high speed request by injection</div>
<div class="rt" style="left:740px;top:892px;letter-spacing:.7px">Generator setpoint</div>

<div class="rv" style="left:507px;top:723px">Модифицирован</div>
<div class="rv" style="left:507px;top:747px">ный</div>
<div class="rv" style="left:507px;top:794px">0.0 <span>Н·м</span></div>
<div class="rv" style="left:507px;top:843px">Не активно</div>
<div class="rv" style="left:507px;top:892px">Не активно</div>
<div class="rv" style="left:1169px;top:723px">Нормальный реж</div>
<div class="rv" style="left:1169px;top:747px">им</div>
<div class="rv" style="left:1169px;top:794px">Не активно</div>
<div class="rv" style="left:1169px;top:843px">Не активно</div>
<div class="rv" style="left:1169px;top:892px">0.00 <span>В</span></div>


</body></html>
